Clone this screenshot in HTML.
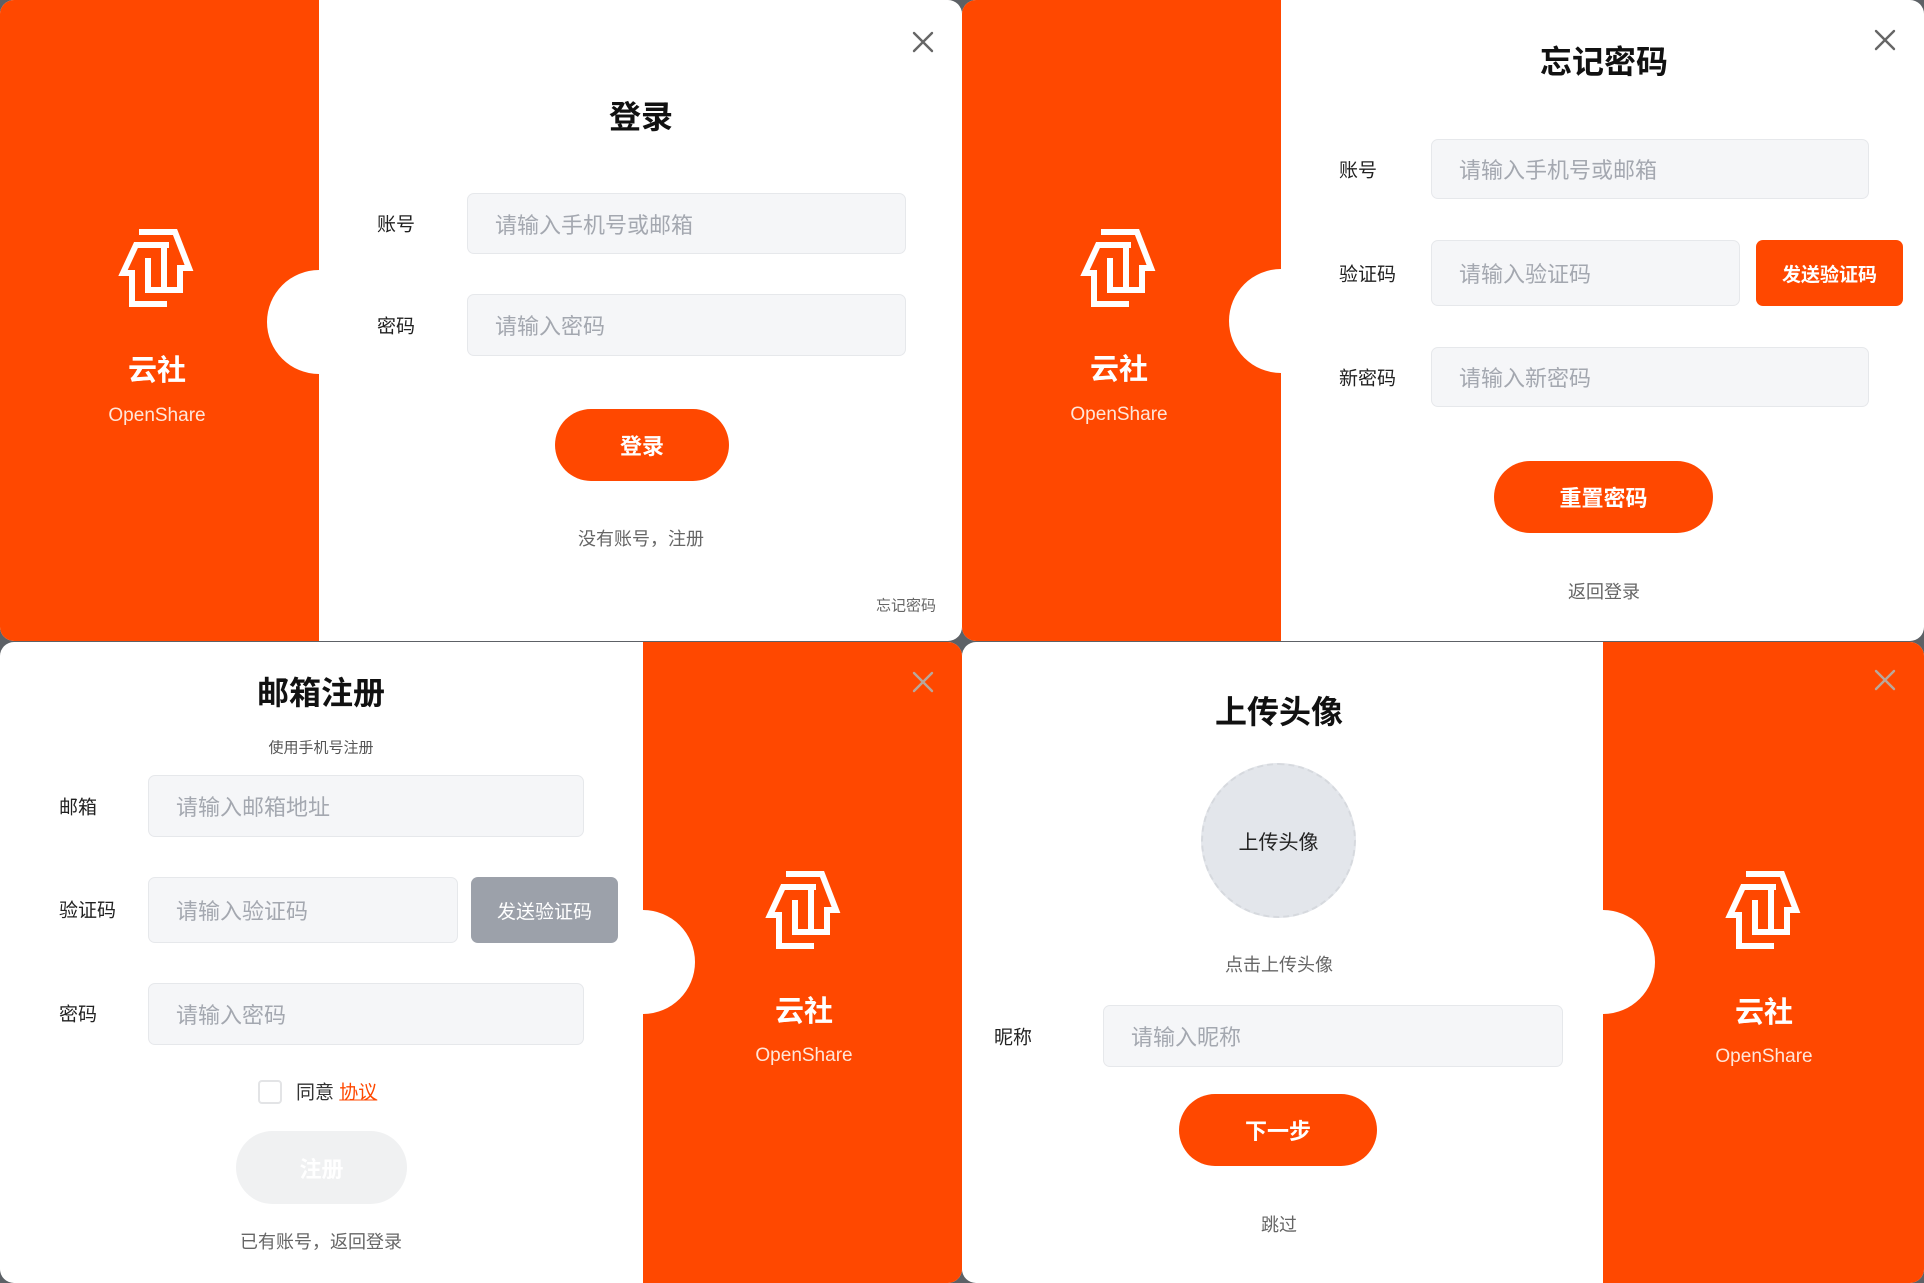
<!DOCTYPE html>
<html><head><meta charset="utf-8"><style>
*{margin:0;padding:0;box-sizing:border-box}
body{width:1924px;height:1282px;background:#5d6166;position:relative;overflow:hidden;font-family:"Liberation Sans","Noto Sans CJK SC",sans-serif}
.q{position:absolute;width:962px;height:641px;border-radius:14px;overflow:hidden;background:#fff}
.o{position:absolute;top:0;height:100%;width:320px;background:#ff4800}
.bump{position:absolute;width:104px;height:104px;border-radius:50%;background:#fff}
.a{position:absolute}
.logo{position:absolute;width:80px;height:86px}
.yun{position:absolute;width:200px;text-align:center;color:#fff;font-weight:bold;font-size:29px}
.os{position:absolute;width:200px;text-align:center;color:#ffe6d9;font-size:19px}
.t{position:absolute;text-align:center;font-weight:bold;font-size:32px;color:#111;transform:translateX(-50%);white-space:nowrap}
.lb{position:absolute;font-size:19px;color:#222;transform:translateY(-50%)}
.in{position:absolute;background:#f5f6f8;border:1px solid #e6e8eb;border-radius:7px;color:#a4a8b0;font-size:22px;padding-left:27px;display:flex;align-items:center}
.btn{position:absolute;background:#ff4800;color:#fff;font-weight:bold;font-size:22px;border-radius:40px;display:flex;align-items:center;justify-content:center}
.sm{position:absolute;font-size:18px;color:#666;transform:translate(-50%,-50%);white-space:nowrap}
.x{position:absolute;width:22px;height:22px}
</style></head><body>
<svg width="0" height="0" style="position:absolute"><defs>
<g id="lg" fill="none" stroke="#fff" stroke-width="6" stroke-linejoin="miter">
<path d="M22 4 H58 L72 40 H63 V62 H34"/>
<path d="M52 17 H19 L6 45 H15 V76 H50"/>
<path d="M31 30 V62 H47 V17"/>
</g>
<g id="xx" stroke-width="2.4" stroke-linecap="round"><path d="M2 2 L20 20 M20 2 L2 20"/></g>
</defs></svg>

<!-- Q1 login -->
<div class="q" style="left:0;top:0">
 <div class="o" style="left:0;width:319px"></div>
 <div class="bump" style="left:267px;top:270px"></div>
 <svg class="logo" style="left:117px;top:226px" viewBox="0 0 80 82"><use href="#lg"/></svg>
 <div class="yun" style="left:57px;top:347px">云社</div>
 <div class="os" style="left:57px;top:405px">OpenShare</div>
 <svg class="x" style="left:912px;top:31px" viewBox="0 0 22 22"><use href="#xx" stroke="#666"/></svg>
 <div class="t" style="left:641px;top:92px">登录</div>
 <div class="lb" style="left:377px;top:223px">账号</div>
 <div class="in" style="left:467px;top:193px;width:439px;height:61px">请输入手机号或邮箱</div>
 <div class="lb" style="left:377px;top:325px">密码</div>
 <div class="in" style="left:467px;top:294px;width:439px;height:62px">请输入密码</div>
 <div class="btn" style="left:555px;top:409px;width:174px;height:72px">登录</div>
 <div class="sm" style="left:641px;top:538px">没有账号，注册</div>
 <div class="sm" style="left:906px;top:605px;font-size:15px">忘记密码</div>
</div>

<!-- Q2 forgot -->
<div class="q" style="left:962px;top:0">
 <div class="o" style="left:0;width:319px"></div>
 <div class="bump" style="left:267px;top:269px"></div>
 <svg class="logo" style="left:117px;top:226px" viewBox="0 0 80 82"><use href="#lg"/></svg>
 <div class="yun" style="left:57px;top:346px">云社</div>
 <div class="os" style="left:57px;top:404px">OpenShare</div>
 <svg class="x" style="left:912px;top:29px" viewBox="0 0 22 22"><use href="#xx" stroke="#666"/></svg>
 <div class="t" style="left:642px;top:37px">忘记密码</div>
 <div class="lb" style="left:377px;top:169px">账号</div>
 <div class="in" style="left:469px;top:139px;width:438px;height:60px">请输入手机号或邮箱</div>
 <div class="lb" style="left:377px;top:273px">验证码</div>
 <div class="in" style="left:469px;top:240px;width:309px;height:66px">请输入验证码</div>
 <div class="btn" style="left:794px;top:240px;width:147px;height:66px;border-radius:7px;font-size:19px">发送验证码</div>
 <div class="lb" style="left:377px;top:377px">新密码</div>
 <div class="in" style="left:469px;top:347px;width:438px;height:60px">请输入新密码</div>
 <div class="btn" style="left:532px;top:461px;width:219px;height:72px">重置密码</div>
 <div class="sm" style="left:642px;top:591px">返回登录</div>
</div>

<!-- Q3 register -->
<div class="q" style="left:0;top:642px">
 <div class="o" style="left:643px;width:320px"></div>
 <div class="bump" style="left:591px;top:268px"></div>
 <svg class="logo" style="left:764px;top:226px" viewBox="0 0 80 82"><use href="#lg"/></svg>
 <div class="yun" style="left:704px;top:346px">云社</div>
 <div class="os" style="left:704px;top:403px">OpenShare</div>
 <svg class="x" style="left:912px;top:29px" viewBox="0 0 22 22"><use href="#xx" stroke="#b9a79c"/></svg>
 <div class="t" style="left:321px;top:26px">邮箱注册</div>
 <div class="sm" style="left:321px;top:105px;font-size:15px;color:#555">使用手机号注册</div>
 <div class="lb" style="left:59px;top:164px">邮箱</div>
 <div class="in" style="left:148px;top:133px;width:436px;height:62px">请输入邮箱地址</div>
 <div class="lb" style="left:59px;top:267px">验证码</div>
 <div class="in" style="left:148px;top:235px;width:310px;height:66px">请输入验证码</div>
 <div class="btn" style="left:471px;top:235px;width:147px;height:66px;border-radius:7px;font-size:19px;background:#9ca1aa;font-weight:normal">发送验证码</div>
 <div class="lb" style="left:59px;top:371px">密码</div>
 <div class="in" style="left:148px;top:341px;width:436px;height:62px">请输入密码</div>
 <div class="a" style="left:258px;top:438px;width:24px;height:24px;border:2px solid #e3e4e6;border-radius:4px"></div>
 <div class="lb" style="left:296px;top:449px;color:#333">同意 <span style="color:#ff4800;text-decoration:underline">协议</span></div>
 <div class="btn" style="left:236px;top:489px;width:171px;height:73px;background:#f0f1f2">注册</div>
 <div class="sm" style="left:321px;top:599px">已有账号，返回登录</div>
</div>

<!-- Q4 avatar -->
<div class="q" style="left:962px;top:642px">
 <div class="o" style="left:641px;width:321px"></div>
 <div class="bump" style="left:589px;top:268px"></div>
 <svg class="logo" style="left:762px;top:226px" viewBox="0 0 80 82"><use href="#lg"/></svg>
 <div class="yun" style="left:702px;top:347px">云社</div>
 <div class="os" style="left:702px;top:404px">OpenShare</div>
 <svg class="x" style="left:912px;top:27px" viewBox="0 0 22 22"><use href="#xx" stroke="#b9a79c"/></svg>
 <div class="t" style="left:317px;top:45px">上传头像</div>
 <div class="a" style="left:239px;top:121px;width:155px;height:155px;border-radius:50%;background:#e3e6eb;border:2px dashed #d6d9de;display:flex;align-items:center;justify-content:center;font-size:20px;color:#222">上传头像</div>
 <div class="sm" style="left:317px;top:322px">点击上传头像</div>
 <div class="lb" style="left:32px;top:394px">昵称</div>
 <div class="in" style="left:141px;top:363px;width:460px;height:62px">请输入昵称</div>
 <div class="btn" style="left:217px;top:452px;width:198px;height:72px">下一步</div>
 <div class="sm" style="left:317px;top:582px">跳过</div>
</div>
</body></html>
